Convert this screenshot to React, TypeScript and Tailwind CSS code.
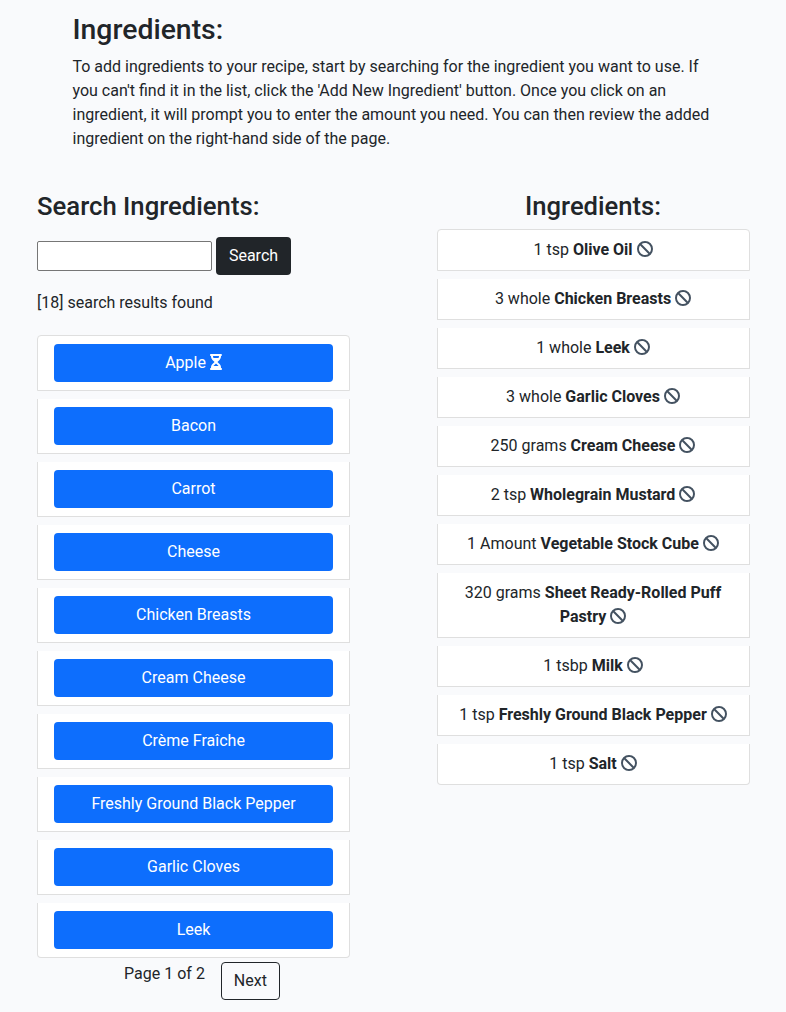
import { FaBan, FaHourglassHalf } from "react-icons/fa6";

const results = ["Apple", "Bacon", "Carrot", "Cheese", "Chicken Breasts", "Cream Cheese", "Crème Fraîche", "Freshly Ground Black Pepper", "Garlic Cloves", "Leek"];
const added: [string, string][] = [
  ["1 tsp", "Olive Oil"],
  ["3 whole", "Chicken Breasts"],
  ["1 whole", "Leek"],
  ["3 whole", "Garlic Cloves"],
  ["250 grams", "Cream Cheese"],
  ["2 tsp", "Wholegrain Mustard"],
  ["1 Amount", "Vegetable Stock Cube"],
  ["320 grams", "Sheet Ready-Rolled Puff Pastry"],
  ["1 tsbp", "Milk"],
  ["1 tsp", "Freshly Ground Black Pepper"],
  ["1 tsp", "Salt"],
];

export default function App() {
  return (
    <div className="h-[1012px] overflow-hidden bg-[#f9fafc] pt-3 font-['Roboto',sans-serif] text-base leading-6 text-[#212529]">
      <header className="ml-[72.5px] w-[641px]">
        <h1 className="mb-2 text-[28.4px] leading-[35px] font-medium">Ingredients:</h1>
        <p>To add ingredients to your recipe, start by searching for the ingredient you want to use. If you can't find it in the list, click the 'Add New Ingredient' button. Once you click on an ingredient, it will prompt you to enter the amount you need. You can then review the added ingredient on the right-hand side of the page.</p>
      </header>
      <main className="mt-10 flex items-start gap-[87px] pl-[37px]">
        <section className="w-[313px]">
          <h2 className="text-[25.7px] leading-[31px] font-medium">Search Ingredients:</h2>
          <div className="mt-[15px] flex items-center gap-1">
            <input aria-label="Search ingredients" className="h-[30px] w-[175px] rounded-[2px] border border-[#767676] bg-white px-1" />
            <button className="h-[38px] w-[75px] rounded bg-[#212529] text-white">Search</button>
          </div>
          <p className="mt-4">[18] search results found</p>
          <ul className="mt-5 flex flex-col gap-2">
            {results.map((name, i) => (
              <li key={name} className="h-[55px] border border-t-0 border-[#dfdfdf] bg-white px-4 pt-2 first:h-14 first:rounded-t first:border-t last:rounded-b">
                <button className="h-[38px] w-full rounded bg-[#0d6efd] text-white">
                  {name}{i === 0 && <> <FaHourglassHalf className="inline-block h-4 w-3 align-[-2px]" /></>}
                </button>
              </li>
            ))}
          </ul>
          <div className="mt-1 flex items-start justify-center gap-4 pl-[17px]">
            <span>Page 1 of 2</span>
            <button className="h-[38px] w-[59px] rounded border border-[#212529]">Next</button>
          </div>
        </section>
        <section className="w-[313px] text-center">
          <h2 className="pr-px text-[25.6px] leading-[31px] font-medium">Ingredients:</h2>
          <ul className="mt-[7px] flex flex-col gap-2">
            {added.map(([amount, name]) => (
              <li key={name} className="border border-t-0 border-[#dfdfdf] bg-white pt-2 pr-[17px] pb-2 pl-4 first:rounded-t first:border-t last:rounded-b">
                {amount} <b className="font-bold">{name}</b> <FaBan className="inline-block size-4 align-[-2px] text-[#445261]" />
              </li>
            ))}
          </ul>
        </section>
      </main>
    </div>
  );
}
